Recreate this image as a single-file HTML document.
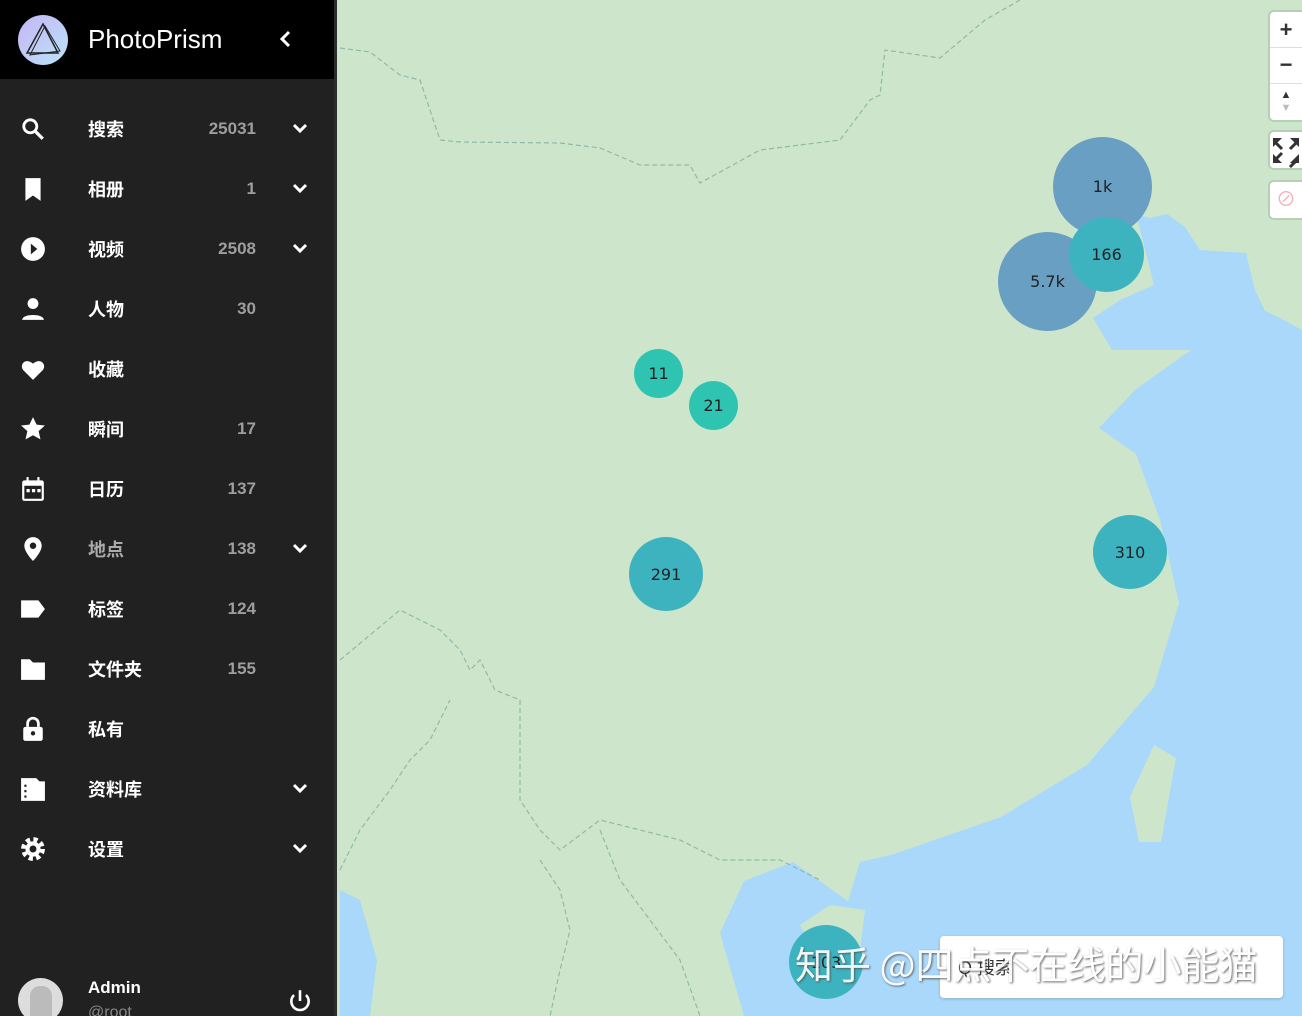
<!DOCTYPE html>
<html><head><meta charset="utf-8"><style>
*{margin:0;padding:0;box-sizing:border-box}
html,body{width:1302px;height:1016px;overflow:hidden}
body{font-family:"Liberation Sans","Noto Sans CJK SC",sans-serif;position:relative;background:#cde6cb}
#side{position:absolute;left:0;top:0;width:337px;height:1016px;background:#212121;border-right:3px solid #2c2c2c;overflow:hidden}
#head{height:79px;background:#000;position:relative}
.logo{position:absolute;left:18px;top:15px;width:50px;height:50px;border-radius:50%;background:linear-gradient(135deg,#c7b5f5,#b9e4f8)}
.title{position:absolute;left:88px;top:24px;color:#fff;font-size:26px}
.row{position:absolute;left:0;width:335px;height:40px;color:#fff}
.row .ic{position:absolute;left:20px;top:7px;width:26px;height:26px}
.row .lb{position:absolute;left:88px;top:7px;font-size:18px;font-weight:bold}
.row .ct{position:absolute;right:79px;top:10px;font-size:17px;color:#9e9e9e;font-weight:bold}
.row .ch{position:absolute;left:292px;top:13px}
.clu{position:absolute;border-radius:50%;display:flex;align-items:center;justify-content:center;font-size:16px;color:#222;font-family:"DejaVu Sans",sans-serif}
.ctl{position:absolute;right:0;width:32px;background:#fff;border-radius:4px 0 0 4px;box-shadow:0 0 0 2px rgba(0,0,0,.1)}
</style></head><body>
<svg style="position:absolute;left:0;top:0" width="1302" height="1016">
<polygon fill="#aad8fb" points="1302,215 1246,253 1200,250 1185,227 1167,214 1150,218 1136,214 1154,285 1120,300 1093,318 1112,350 1191,350 1136,389 1099,428 1136,454 1160,520 1179,603 1154,687 1087,765 1001,817 891,855 860,862 848,901 793,862 744,881 720,933 744,1016 1302,1016"/>
<polygon fill="#cde6cb" points="1246,253 1270,230 1302,215 1302,330 1280,318 1265,311 1255,290"/>
<polygon fill="#cde6cb" points="1154,745 1176,758 1161,842 1139,842 1130,797"/>
<polygon fill="#cde6cb" points="800,925 830,905 865,910 860,950 820,960"/>
<polygon fill="#aad8fb" points="340,890 360,900 377,960 370,1016 340,1016"/>
<g fill="none" stroke="#8fb9a8" stroke-width="1.2" stroke-dasharray="5,3">
<polyline points="340,48 370,52 400,75 420,80 440,140 460,142 560,143 600,148 640,165 690,165 700,183 760,150 840,140 870,100 880,95 885,50 940,58 985,20 1020,0"/>
<polyline points="340,660 400,610 440,630 460,650 470,670 480,660 495,690 520,700 520,800 540,830 560,850 600,820 640,830 680,840 720,860 780,860 820,880"/>
<polyline points="340,870 360,830 390,790 410,760 430,740 440,720 450,700"/>
<polyline points="600,830 620,880 650,920 680,960 700,1016"/>
<polyline points="540,860 560,890 570,930 560,970 550,1016"/>
</g>
</svg>
<div class="clu" style="left:1053px;top:137px;width:99px;height:99px;background:#6a9fc4">1k</div>
<div class="clu" style="left:998px;top:232px;width:99px;height:99px;background:#6a9fc4">5.7k</div>
<div class="clu" style="left:1069px;top:217px;width:75px;height:75px;background:#3db3c0">166</div>
<div class="clu" style="left:634px;top:349px;width:49px;height:49px;background:#2ec4b1">11</div>
<div class="clu" style="left:689px;top:381px;width:49px;height:49px;background:#2ec4b1">21</div>
<div class="clu" style="left:629px;top:537px;width:74px;height:74px;background:#3db3c0">291</div>
<div class="clu" style="left:1093px;top:515px;width:74px;height:74px;background:#3db3c0">310</div>
<div class="clu" style="left:789px;top:925px;width:74px;height:74px;background:#3db3c0">103</div>
<div style="position:absolute;left:940px;top:936px;width:343px;height:62px;background:#fff;border-radius:4px;box-shadow:0 1px 3px rgba(0,0,0,.2);font-size:18px;padding:18px 18px;color:#333">Q 搜索</div>
<div style="position:absolute;left:795px;top:935px;font-size:38px;color:#fff;text-shadow:1px 1px 2px #555;font-family:'Noto Sans CJK SC',sans-serif;opacity:.9;white-space:nowrap">知乎 @四点不在线的小能猫</div>
<div class="ctl" style="top:12px;height:108px">
<div style="height:36px;border-bottom:1px solid #ddd;text-align:center;font-size:22px;font-weight:bold;line-height:36px;color:#333">+</div>
<div style="height:36px;border-bottom:1px solid #ddd;text-align:center;font-size:22px;font-weight:bold;line-height:34px;color:#333">−</div>
<div style="height:36px;text-align:center;font-size:11px;line-height:13px;padding-top:5px;color:#333">▲<br><span style="color:#bbb">▼</span></div></div>
<div class="ctl" style="top:132px;height:36px"><svg width="32" height="36" viewBox="0 0 32 36"><g stroke="#333" stroke-width="3" fill="none"><path d="M5 10l7 7M27 10l-7 7M5 28l7-7M27 28l-7 7"/></g><g fill="#333"><path d="M3 6h9l-9 9z"/><path d="M29 6h-9l9 9z"/><path d="M3 31h9l-9-9z"/><path d="M29 31h-9l9-9z"/></g></svg></div>
<div class="ctl" style="top:182px;height:36px;text-align:center;font-size:20px;line-height:36px;color:#f3b3b9">⊘</div>
<div id="side">
<div id="head"><div class="logo"><svg width="50" height="50"><polygon points="25,9 9,38 40,38" fill="none" stroke="#222" stroke-width="1.5"/><polygon points="27,11 12,40 42,36" fill="none" stroke="#222" stroke-width="1"/></svg></div>
<div class="title">PhotoPrism</div>
<svg style="position:absolute;left:278px;top:30px" width="14" height="18"><polyline points="11,2 4,9 11,16" fill="none" stroke="#fff" stroke-width="3"/></svg></div>
<div class="row" style="top:109px"><svg class="ic" viewBox="0 0 24 24"><circle cx="9.5" cy="9.5" r="6" fill="none" stroke="#fff" stroke-width="2.6"/><line x1="14" y1="14" x2="21" y2="21" stroke="#fff" stroke-width="3"/></svg><span class="lb">搜索</span><span class="ct">25031</span><svg class="ch" width="16" height="12"><polyline points="2,3 8,9 14,3" fill="none" stroke="#fff" stroke-width="3"/></svg></div>
<div class="row" style="top:169px"><svg class="ic" viewBox="0 0 24 24"><path d="M5 2h14v21l-7-5-7 5z" fill="#fff"/></svg><span class="lb">相册</span><span class="ct">1</span><svg class="ch" width="16" height="12"><polyline points="2,3 8,9 14,3" fill="none" stroke="#fff" stroke-width="3"/></svg></div>
<div class="row" style="top:229px"><svg class="ic" viewBox="0 0 24 24"><circle cx="12" cy="12" r="11" fill="#fff"/><path d="M10 7l6 5-6 5z" fill="#212121"/></svg><span class="lb">视频</span><span class="ct">2508</span><svg class="ch" width="16" height="12"><polyline points="2,3 8,9 14,3" fill="none" stroke="#fff" stroke-width="3"/></svg></div>
<div class="row" style="top:289px"><svg class="ic" viewBox="0 0 24 24"><circle cx="12" cy="7" r="5" fill="#fff"/><path d="M2 22c0-6 20-6 20 0z" fill="#fff"/></svg><span class="lb">人物</span><span class="ct">30</span></div>
<div class="row" style="top:349px"><svg class="ic" viewBox="0 0 24 24"><path d="M12 22L3 13C-1 8 5 1 12 7c7-6 13 1 9 6z" fill="#fff"/></svg><span class="lb">收藏</span></div>
<div class="row" style="top:409px"><svg class="ic" viewBox="0 0 24 24"><path d="M12 1l3.3 7 7.7.8-5.8 5.2 1.7 7.6L12 17.8 5.1 21.6l1.7-7.6L1 8.8 8.7 8z" fill="#fff"/></svg><span class="lb">瞬间</span><span class="ct">17</span></div>
<div class="row" style="top:469px"><svg class="ic" viewBox="0 0 24 24"><rect x="2" y="4" width="20" height="19" rx="2" fill="#fff"/><rect x="4" y="9" width="16" height="12" fill="#212121"/><rect x="6" y="12" width="3" height="3" fill="#fff"/><rect x="11" y="12" width="3" height="3" fill="#fff"/><rect x="16" y="12" width="3" height="3" fill="#fff"/><rect x="6" y="1" width="2" height="5" fill="#fff"/><rect x="16" y="1" width="2" height="5" fill="#fff"/></svg><span class="lb">日历</span><span class="ct">137</span></div>
<div class="row" style="top:529px"><svg class="ic" viewBox="0 0 24 24"><path d="M12 1a8 8 0 0 0-8 8c0 6 8 14 8 14s8-8 8-14a8 8 0 0 0-8-8z" fill="#fff"/><circle cx="12" cy="9" r="3" fill="#212121"/></svg><span class="lb" style="color:#aaa">地点</span><span class="ct">138</span><svg class="ch" width="16" height="12"><polyline points="2,3 8,9 14,3" fill="none" stroke="#fff" stroke-width="3"/></svg></div>
<div class="row" style="top:589px"><svg class="ic" viewBox="0 0 24 24"><path d="M1 4h16l6 8-6 8H1z" fill="#fff"/></svg><span class="lb">标签</span><span class="ct">124</span></div>
<div class="row" style="top:649px"><svg class="ic" viewBox="0 0 24 24"><path d="M1 3h8l3 3h11v16H1z" fill="#fff"/></svg><span class="lb">文件夹</span><span class="ct">155</span></div>
<div class="row" style="top:709px"><svg class="ic" viewBox="0 0 24 24"><path d="M7 10V7a5 5 0 0 1 10 0v3" fill="none" stroke="#fff" stroke-width="2.5"/><rect x="3" y="10" width="18" height="13" rx="2" fill="#fff"/><circle cx="12" cy="16" r="2" fill="#212121"/></svg><span class="lb">私有</span></div>
<div class="row" style="top:769px"><svg class="ic" viewBox="0 0 24 24"><path d="M1 2h14l3 3h5v18H1z" fill="#fff"/><rect x="4" y="8" width="2" height="2" fill="#212121"/><rect x="4" y="13" width="2" height="2" fill="#212121"/><rect x="4" y="18" width="2" height="2" fill="#212121"/></svg><span class="lb">资料库</span><svg class="ch" width="16" height="12"><polyline points="2,3 8,9 14,3" fill="none" stroke="#fff" stroke-width="3"/></svg></div>
<div class="row" style="top:829px"><svg class="ic" viewBox="0 0 24 24"><circle cx="12" cy="12" r="8" fill="none" stroke="#fff" stroke-width="6" stroke-dasharray="3.5,2.8"/><circle cx="12" cy="12" r="7" fill="#fff"/><circle cx="12" cy="12" r="3.2" fill="#212121"/></svg><span class="lb">设置</span><svg class="ch" width="16" height="12"><polyline points="2,3 8,9 14,3" fill="none" stroke="#fff" stroke-width="3"/></svg></div>
<div style="position:absolute;left:18px;top:978px;width:45px;height:45px;border-radius:50%;background:#ddd;overflow:hidden"><div style="margin:8px auto 0;width:22px;height:40px;background:#bbb;border-radius:10px 10px 0 0"></div></div>
<div style="position:absolute;left:88px;top:978px;color:#fff;font-size:17px;font-weight:bold">Admin</div>
<div style="position:absolute;left:88px;top:1004px;color:#888;font-size:16px">@root</div>
<svg style="position:absolute;left:287px;top:988px" width="26" height="26" viewBox="0 0 24 24"><path d="M6.5 6.5a8 8 0 1 0 11 0" fill="none" stroke="#fff" stroke-width="2.4"/><line x1="12" y1="2" x2="12" y2="12" stroke="#fff" stroke-width="2.4"/></svg>
</div>
</body></html>
